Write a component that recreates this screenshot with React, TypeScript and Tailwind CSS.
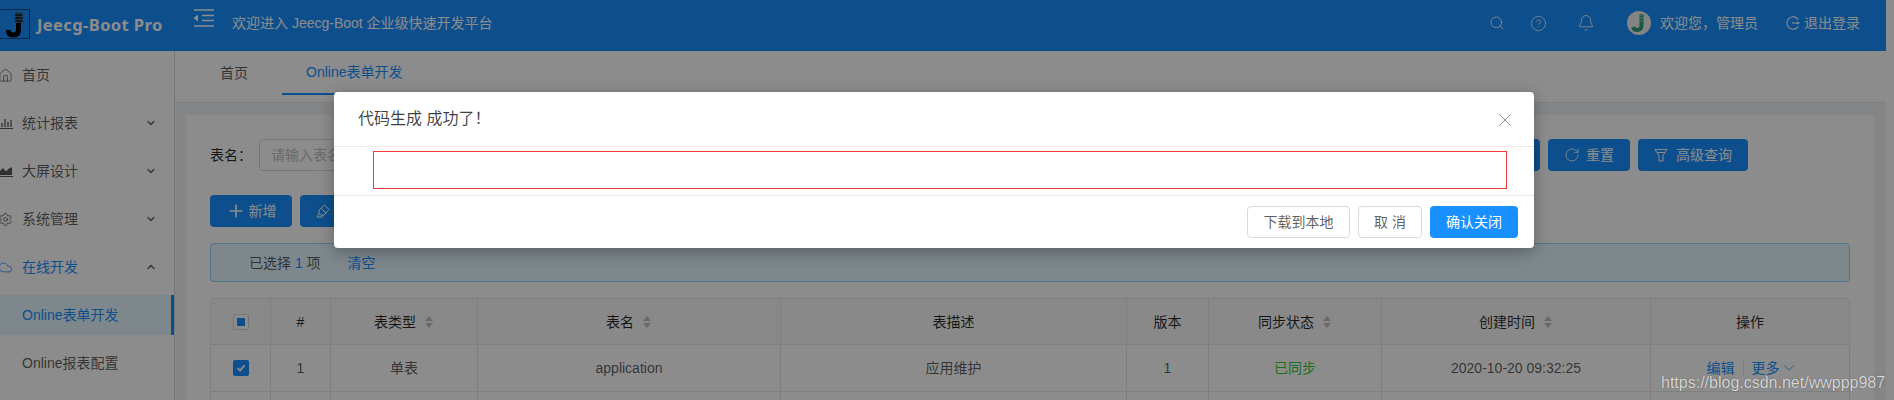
import React from "react";
import { Search, CircleHelp, Bell, Settings, Cloud, ChevronDown, ChevronUp, Plus, RotateCw, X, House } from "lucide-react";

const FONT = "font-['Liberation_Sans','Noto_Sans_CJK_SC',sans-serif]";

function Logo() {
  return (
    <div className="w-[30px] h-[30px] mb-[3px] border border-[#0b4a85] border-l-0 shrink-0">
      <svg width="29" height="28" viewBox="0 0 29 28">
        <path d="M18.5 3 V20 Q18.5 25 13 25 Q8 25 8.5 20" fill="none" stroke="#000" strokeWidth="5" />
        <rect x="15" y="2" width="8" height="11" fill="#4a6f96" opacity="0.8" />
        <path d="M15 5h8M15 8h8M15 11h8" stroke="#000" strokeWidth="1" />
      </svg>
    </div>
  );
}

function Indent() {
  return (
    <svg className="mb-[15px] shrink-0" width="21" height="18" viewBox="0 0 21 18" fill="none" stroke="#fff" strokeWidth="1.6">
      <path d="M1 1h20M9 6.5h12M9 11.5h12M1 17h20" />
      <path d="M5 5.5v7L0.5 9z" fill="#fff" stroke="none" />
    </svg>
  );
}

function Avatar() {
  return (
    <div className="w-6 h-6 rounded-full bg-[#f0f0f0] flex items-center justify-center overflow-hidden">
      <svg width="24" height="24" viewBox="0 0 24 24" fill="none">
        <path d="M14.5 3V14Q14.5 19 10 19Q7 19 6 16" stroke="#2fa37c" strokeWidth="4" />
        <path d="M12.5 4h4M12.5 7h4M12.5 10h4" stroke="#9fd8c4" strokeWidth="1" />
      </svg>
    </div>
  );
}

function LogoutIcon() {
  return (
    <svg width="14" height="14" viewBox="0 0 14 14" fill="none" stroke="#fff" strokeWidth="1.1">
      <path d="M12.3 3.6A6.2 6.2 0 1 0 12.3 10.4" />
      <path d="M6 7h7.4" />
      <path d="M11 5.2 13.4 7 11 8.8z" fill="#fff" stroke="none" />
    </svg>
  );
}

function BarIcon() {
  return (
    <svg width="14" height="14" viewBox="0 0 14 14" fill="none" stroke="currentColor" strokeWidth="1">
      <path d="M0 12.5h14" />
      <path d="M3 11V7M6 11V3M9 11V6M12 11V4" strokeWidth="1.3" />
    </svg>
  );
}

function AreaIcon() {
  return (
    <svg width="14" height="14" viewBox="0 0 14 14" fill="currentColor">
      <path d="M0 12h14v1H0z" />
      <path d="M1 11V7l3-3 3 3.4 3-3 3-1.4V11z" />
    </svg>
  );
}

function FunnelIcon() {
  return (
    <svg width="14" height="14" viewBox="0 0 14 14" fill="none" stroke="#fff" strokeWidth="1">
      <path d="M1 1.5h12L9 7.5V13H5V7.5z" />
      <path d="M3.2 4.5h7.6" />
    </svg>
  );
}

function HighlightIcon() {
  return (
    <svg width="14" height="14" viewBox="0 0 14 14" fill="none" stroke="#fff" strokeWidth="1">
      <path d="M8.5 1 13 5.5 8 11H4.5L3 9.5V6z" />
      <path d="M3 9.5 1 13h5l1-2M5.5 4.5 10 9" />
    </svg>
  );
}

function Caret() {
  return (
    <span className="flex flex-col gap-[2px] ml-2 w-[10px] items-center">
      <span className="w-0 h-0 border-x-[4px] border-x-transparent border-b-[5px] border-b-[#bfbfbf]" />
      <span className="w-0 h-0 border-x-[4px] border-x-transparent border-t-[5px] border-t-[#bfbfbf]" />
    </span>
  );
}

function MenuItem({ icon, label, arrow, active }: { icon?: React.ReactNode; label: string; arrow?: "down" | "up"; active?: boolean }) {
  return (
    <div className={`h-10 mb-2 flex items-center text-sm ${active ? "text-[#1890ff]" : "text-[rgba(0,0,0,0.65)]"}`}>
      <span className="-ml-[2px] w-[15px] mr-[9px] flex justify-center shrink-0">{icon}</span>
      <span>{label}</span>
      {arrow === "down" && <ChevronDown size={12} strokeWidth={3} className="ml-auto mr-[17px] text-[rgba(0,0,0,0.6)]" />}
      {arrow === "up" && <ChevronUp size={12} strokeWidth={3} className="ml-auto mr-[17px] text-[rgba(0,0,0,0.6)]" />}
    </div>
  );
}

function PrimaryBtn({ icon, label, w }: { icon: React.ReactNode; label: string; w: string }) {
  return (
    <div className={`${w} h-8 rounded bg-[#1890ff] text-white text-sm flex items-center justify-center gap-2`}>
      {icon}
      <span>{label}</span>
    </div>
  );
}

const CELL = "border-r border-b border-[#e8e8e8] flex items-center justify-center";

function Head({ label, sort, last, children }: { label?: string; sort?: boolean; last?: boolean; children?: React.ReactNode }) {
  return (
    <div className={`${last ? "border-b border-[#e8e8e8] flex items-center justify-center" : CELL} h-[46px] bg-[#fafafa] text-sm text-[rgba(0,0,0,0.85)]`}>
      {children}
      <span>{label}</span>
      {sort && <Caret />}
    </div>
  );
}

function Cell({ children, last }: { children?: React.ReactNode; last?: boolean }) {
  return (
    <div className={`${last ? "border-b border-[#e8e8e8] flex items-center justify-center" : CELL} h-[47px] text-sm text-[rgba(0,0,0,0.65)]`}>
      {children}
    </div>
  );
}

export default function App() {
  return (
    <div className={`relative h-[400px] w-[1894px] overflow-hidden bg-white ${FONT}`}>
      {/* top bar */}
      <header className="h-[51px] w-[1886px] bg-[#1890ff] text-white flex items-center text-sm">
        <Logo />
        <span className="ml-[7px] w-[156px] text-[16.5px] font-bold tracking-[0.4px] pb-[2px] font-['Noto_Sans',sans-serif]">Jeecg-Boot Pro</span>
        <Indent />
        <span className="ml-[18px] pb-[5px]">欢迎进入 Jeecg-Boot 企业级快速开发平台</span>
        <div className="ml-auto flex items-center pb-[5px]">
          <Search size={16} strokeWidth={1.3} />
          <CircleHelp size={17} strokeWidth={1.1} className="ml-[25px]" />
          <Bell size={18} strokeWidth={1.1} className="ml-[30px]" />
          <span className="ml-[32px]"><Avatar /></span>
          <span className="ml-[9px]">欢迎您，管理员</span>
          <span className="ml-[28px]"><LogoutIcon /></span>
          <span className="ml-[4px] mr-[26px]">退出登录</span>
        </div>
      </header>

      <div className="flex w-[1886px]">
        {/* side menu */}
        <aside className="w-[174px] shrink-0 pt-1">
          <MenuItem icon={<House size={15} strokeWidth={1.2} />} label="首页" />
          <MenuItem icon={<BarIcon />} label="统计报表" arrow="down" />
          <MenuItem icon={<AreaIcon />} label="大屏设计" arrow="down" />
          <MenuItem icon={<Settings size={15} strokeWidth={1.2} />} label="系统管理" arrow="down" />
          <MenuItem icon={<Cloud size={15} strokeWidth={1.2} />} label="在线开发" arrow="up" active />
          <div className="h-10 mb-2 pl-[22px] flex items-center text-sm text-[#1890ff] bg-[#e6f7ff] border-r-[3px] border-[#1890ff]">Online表单开发</div>
          <div className="h-10 pl-[22px] flex items-center text-sm text-[rgba(0,0,0,0.65)]">Online报表配置</div>
        </aside>

        <main className="flex-1 border-l border-[#d9d9d9] min-w-0">
          {/* tabs */}
          <div className="h-[52px] border-b border-[#e8e8e8] pl-[21px] flex items-start text-sm">
            <div className="h-[44px] px-6 flex items-center text-[rgba(0,0,0,0.65)]">首页</div>
            <div className="h-[44px] ml-[10px] px-6 flex items-center text-[#1890ff] border-b-2 border-[#1890ff]">Online表单开发</div>
          </div>

          <div className="bg-[#f0f2f5] pl-[11px] pr-3 pt-3 h-[400px]">
            <div className="bg-white h-full px-6 pt-6">
              {/* search row */}
              <div className="flex items-center h-8 text-sm">
                <span className="w-[49px] text-[rgba(0,0,0,0.85)]">表名：</span>
                <div className="w-[300px] h-8 border border-[#d9d9d9] rounded px-[11px] flex items-center text-[#bfbfbf]">请输入表名</div>
                <div className="ml-auto mr-[102px] flex gap-2">
                  <PrimaryBtn icon={<Search size={14} />} label="查询" w="w-[82px]" />
                  <PrimaryBtn icon={<RotateCw size={16} strokeWidth={1.2} className="-mr-[2px]" />} label="重置" w="w-[82px]" />
                  <PrimaryBtn icon={<FunnelIcon />} label="高级查询" w="w-[110px]" />
                </div>
              </div>

              {/* actions */}
              <div className="flex gap-2 mt-6">
                <PrimaryBtn icon={<Plus size={20} strokeWidth={2} className="-mr-[5px]" />} label="新增" w="w-[82px]" />
                <PrimaryBtn icon={<HighlightIcon />} label="代码生成" w="w-[110px]" />
              </div>

              {/* selection notice */}
              <div className="mt-4 h-[39px] border border-[#91d5ff] bg-[#e6f7ff] rounded pl-[38px] flex items-center text-sm text-[rgba(0,0,0,0.65)]">
                <span>已选择 <span className="text-[#1890ff]">1</span> 项</span>
                <span className="ml-[27px] text-[#1890ff]">清空</span>
              </div>

              {/* table */}
              <div className="mt-4 border-t border-l border-r border-[#e8e8e8] rounded-t grid grid-cols-[60px_60px_147px_303px_346px_82px_173px_269px_1fr]">
                <Head>
                  <span className="w-4 h-4 bg-white border border-[#d9d9d9] rounded-[2px] flex items-center justify-center">
                    <span className="w-2 h-2 bg-[#1890ff]" />
                  </span>
                </Head>
                <Head label="#" />
                <Head label="表类型" sort />
                <Head label="表名" sort />
                <Head label="表描述" />
                <Head label="版本" />
                <Head label="同步状态" sort />
                <Head label="创建时间" sort />
                <Head label="操作" last />

                <Cell>
                  <span className="w-4 h-4 rounded-[2px] bg-[#1890ff] flex items-center justify-center">
                    <svg width="10" height="10" viewBox="0 0 10 10" fill="none" stroke="#fff" strokeWidth="1.8"><path d="M1.5 5.2 4 7.6 8.6 2.4" /></svg>
                  </span>
                </Cell>
                <Cell>1</Cell>
                <Cell>单表</Cell>
                <Cell>application</Cell>
                <Cell>应用维护</Cell>
                <Cell>1</Cell>
                <Cell><span className="text-[#32cd32]">已同步</span></Cell>
                <Cell>2020-10-20 09:32:25</Cell>
                <Cell last>
                  <span className="text-[#1890ff]">编辑</span>
                  <span className="w-px h-[14px] bg-[#e8e8e8] mx-2" />
                  <span className="text-[#1890ff]">更多</span>
                  <ChevronDown size={18} strokeWidth={1} className="text-[#1890ff] -mr-[4px]" />
                </Cell>

                <Cell /><Cell /><Cell /><Cell /><Cell /><Cell /><Cell /><Cell /><Cell last />
              </div>
            </div>
          </div>
        </main>
      </div>

      {/* page mask */}
      <div className="absolute inset-0 bg-[rgba(0,0,0,0.45)]" />

      {/* dialog */}
      <div className="absolute left-[334px] top-[92px] w-[1200px] h-[156px] bg-white rounded shadow-[0_4px_16px_rgba(0,0,0,0.3)] flex flex-col">
        <div className="h-[55px] border-b border-[#e8e8e8] pl-6 pr-[18px] flex items-center justify-between text-[rgba(0,0,0,0.75)]">
          <span className="text-[16px]">代码生成 成功了！</span>
          <X size={22} strokeWidth={1} className="text-[rgba(0,0,0,0.45)] mt-[1px]" />
        </div>
        <div className="h-[49px] pl-[39px] pt-[4px] border-b border-[#e8e8e8]">
          <div className="w-[1134px] h-[38px] border border-[#f03a3a]" />
        </div>
        <div className="flex justify-end gap-2 pt-[10px] pr-[16px] text-sm">
          <div className="w-[103px] h-8 rounded border border-[#d9d9d9] flex items-center justify-center text-[rgba(0,0,0,0.65)]">下载到本地</div>
          <div className="w-[64px] h-8 rounded border border-[#d9d9d9] flex items-center justify-center text-[rgba(0,0,0,0.65)]">取 消</div>
          <div className="w-[88px] h-8 rounded bg-[#1890ff] flex items-center justify-center text-white">确认关闭</div>
        </div>
      </div>

      {/* watermark */}
      <span className="absolute left-[1661px] top-[371px] text-[16px] text-[#d6d6d6] font-['Liberation_Sans',sans-serif] [text-shadow:0_0_1px_rgba(0,0,0,0.5)]">https://blog.csdn.net/wwppp987</span>
    </div>
  );
}
